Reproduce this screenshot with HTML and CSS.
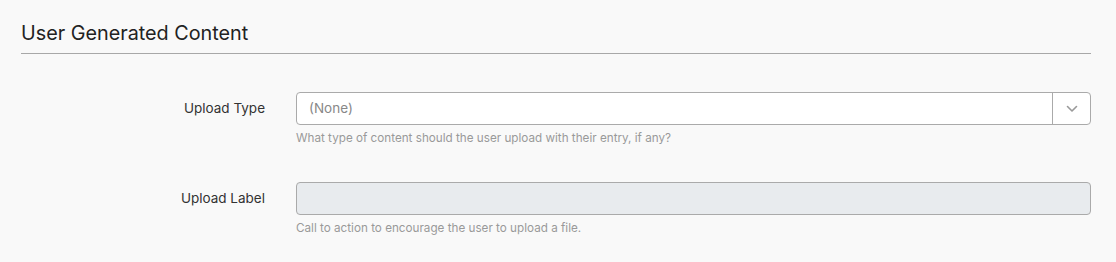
FILE: index.html
```html
<!DOCTYPE html>
<html>
<head>
<meta charset="utf-8">
<link rel="stylesheet" href="styles.css">
</head>
<body>
<section class="section">
  <h2 class="section-title">User Generated Content</h2>
  <div class="form">
    <div class="row">
      <label class="label">Upload Type</label>
      <div class="field">
        <div class="select">
          <span class="select-value">(None)</span>
          <span class="select-btn">
            <svg width="12" height="8" viewBox="0 0 12 8"><path d="M1.5 1.5 L6 6 L10.5 1.5" fill="none" stroke="#999" stroke-width="1.6" stroke-linecap="round" stroke-linejoin="round"/></svg>
          </span>
        </div>
        <div class="hint">What type of content should the user upload with their entry, if any?</div>
      </div>
    </div>
    <div class="row">
      <label class="label">Upload Label</label>
      <div class="field">
        <div class="input"></div>
        <div class="hint">Call to action to encourage the user to upload a file.</div>
      </div>
    </div>
  </div>
</section>
</body>
</html>
```
FILE: styles.css
```css
html, body {
  margin: 0;
  padding: 0;
  background: #f9f9f9;
  font-family: Inter, "Noto Sans", sans-serif;
  color: #222;
}
.section {
  padding: 21px 25px 0 21px;
}
.section-title {
  margin: 0;
  font-size: 19.8px;
  font-weight: 400;
  line-height: 24px;
  color: #222;
  padding-bottom: 8px;
  border-bottom: 1px solid #a8a8a8;
}
.form {
  padding-top: 38px;
}
.row {
  display: flex;
  gap: 31px;
  margin-bottom: 36px;
}
.label {
  width: 244px;
  flex: none;
  text-align: right;
  font-size: 13.5px;
  line-height: 33px;
  color: #333;
}
.field {
  flex: 1;
  min-width: 0;
}
.select {
  display: flex;
  height: 31px;
  border: 1px solid #aaa;
  border-radius: 4px;
  background: #fff;
}
.select-value {
  flex: 1;
  padding-left: 12px;
  font-size: 13.5px;
  line-height: 31px;
  color: #888;
}
.select-btn {
  width: 37px;
  border-left: 1px solid #aaa;
  display: flex;
  align-items: center;
  justify-content: center;
}
.input {
  height: 31px;
  border: 1px solid #aaa;
  border-radius: 4px;
  background: #e8ebee;
}
.hint {
  margin-top: 6px;
  font-size: 11.7px;
  line-height: 15px;
  color: #999;
}
```
